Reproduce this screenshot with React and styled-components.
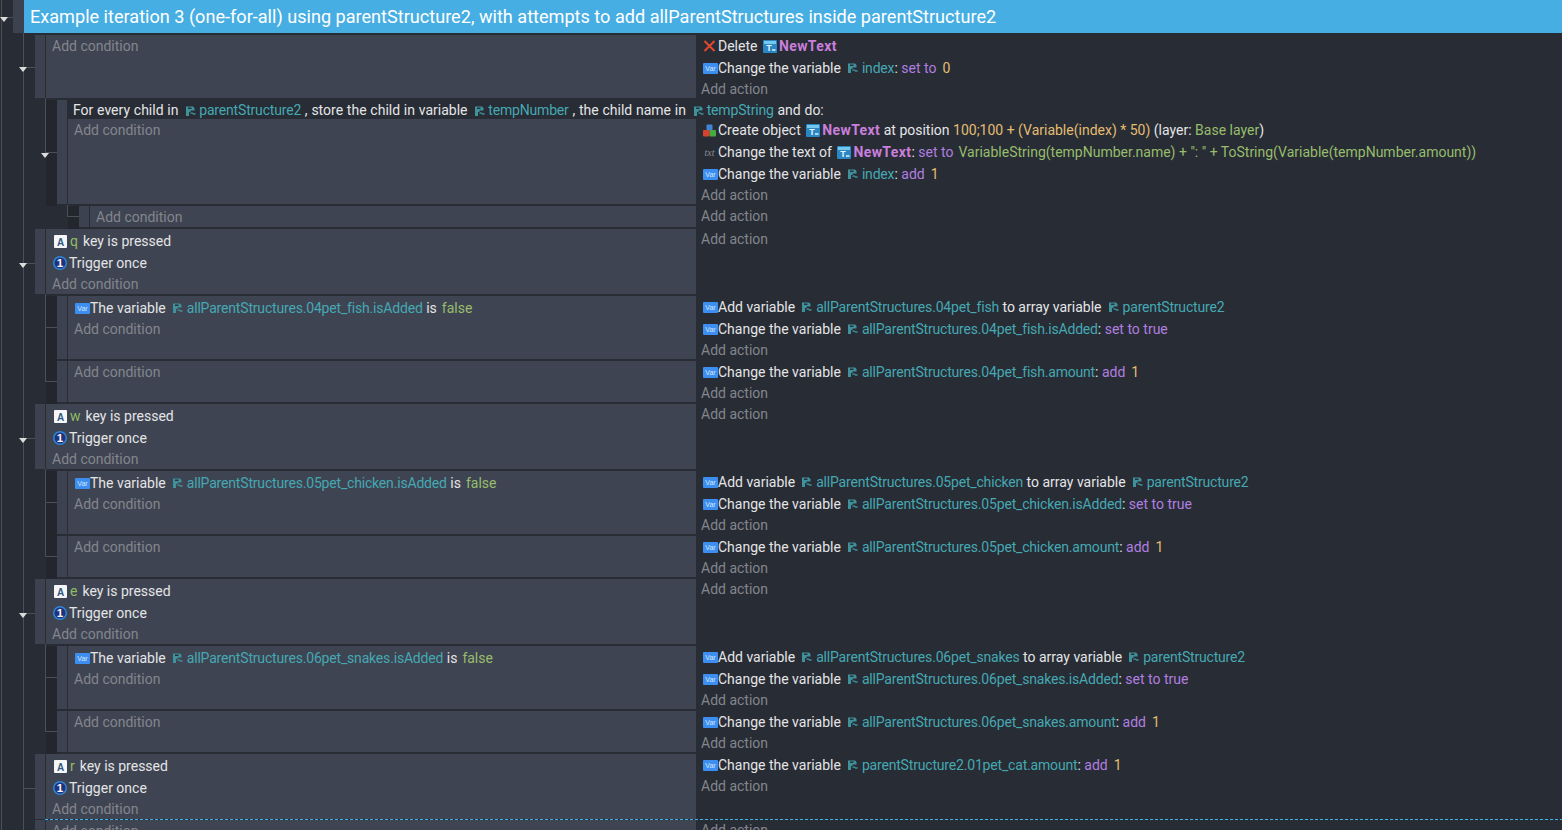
import styled, { createGlobalStyle } from "styled-components";

const GlobalStyle = createGlobalStyle`
  html, body {
    margin: 0;
    height: 830px;
    overflow: hidden;
    background: #282c34;
  }
`;

const Sheet = styled.div`
  width: 1562px;
  height: 830px;
  overflow: hidden;
  font-family: "Roboto", "Liberation Sans", sans-serif;
  font-size: 14px;
  color: #e4e5e7;
  background:
    linear-gradient(#4b4f59, #4b4f59) 1px 0 / 1px 100% no-repeat,
    linear-gradient(#4b4f59, #4b4f59) 23px 0 / 1px 100% no-repeat,
    #282c34;
`;

const GroupRow = styled.div`
  position: relative;
  display: flex;
  height: 33px;
  margin: 0 0 2px 13px;
`;

const GroupBar = styled.div`
  width: 11px;
  background: #3d4250;
`;

const GroupTitle = styled.div`
  flex: 1;
  padding-left: 6px;
  background: #47aee3;
  color: #fff;
  font-size: 18.1px;
  line-height: 34px;
  white-space: nowrap;
`;

const EventRow = styled.div`
  position: relative;
  display: flex;
  margin-left: ${(p) => 35 + p.$level * 22}px;
  margin-bottom: ${(p) => p.$gap ?? 2}px;

  &::before {
    content: "";
    display: ${(p) => (p.$level > 0 ? "block" : "none")};
    position: absolute;
    left: -11px;
    top: 0;
    bottom: -2px;
    width: 11px;
    background: #23262c;
  }
`;

const Bar = styled.div`
  flex: none;
  width: 10px;
  margin-right: 1px;
  background: #3d4250;
`;

const EventBody = styled.div`
  flex: 1;
  min-width: 0;
  display: flex;
  flex-direction: column;
`;

const LoopHeader = styled.div`
  height: 19px;
  padding-left: 5px;
  line-height: 20px;
  white-space: nowrap;
  word-spacing: 0.3px;
`;

const Columns = styled.div`
  display: flex;
`;

const Conditions = styled.div`
  flex: 1;
  padding: 1px 0 0 6px;
  background: #3f4452;
`;

const Actions = styled.div`
  flex: none;
  width: 861px;
  padding-left: 5px;
`;

const Line = styled.div`
  display: flex;
  align-items: center;
  height: 22px;
  padding-left: ${(p) => (p.$action ? 2 : 1)}px;
  white-space: pre;
`;

const AddCondition = styled.div`
  height: 20px;
  line-height: 20px;
  color: #83868d;
`;

const AddAction = styled.div`
  height: 19px;
  line-height: 21px;
  color: #83868d;
`;

const Ref = styled.span`
  color: #45a8b3;
  letter-spacing: -0.18px;
`;

const Op = styled.span`
  color: #b07fe0;
`;

const Num = styled.span`
  color: #e3bd72;
  margin-left: ${(p) => p.$gap ?? 6}px;
`;

const Str = styled.span`
  color: #97bd6d;
  margin-left: ${(p) => p.$gap ?? 5}px;
`;

const ObjName = styled.span`
  color: #c97fdc;
  font-weight: 700;
  letter-spacing: 0.4px;
`;

const Key = styled.span`
  color: #8fbd63;
  margin: 0 5px 0 3px;
`;

const Toggle = styled.div`
  position: absolute;
  left: ${(p) => p.$left ?? -16}px;
  top: calc(50% + ${(p) => p.$shift ?? 0}px);
  width: 0;
  height: 0;
  border-left: 4.5px solid transparent;
  border-right: 4.5px solid transparent;
  border-top: 5px solid #dcdcdc;
`;

const Stub = styled.div`
  position: absolute;
  left: -12px;
  top: calc(50% + ${(p) => p.$shift ?? 0}px);
  width: 12px;
  height: 1px;
  background: #4b4f59;
`;

const Branch = styled.div`
  position: absolute;
  left: -12px;
  bottom: calc(50% - ${(p) => p.$shift ?? 0}px);
  width: 11px;
  height: ${(p) => p.$up}px;
  border-left: 1px solid #4b4f59;
  border-bottom: 1px solid #4b4f59;
`;

const DropLine = styled.div`
  height: 1px;
  margin: -1px 0 0 45px;
  background: repeating-linear-gradient(to right, #3fb4ea 0 3px, transparent 3px 5px);
`;

const RefIconInline = styled.span`
  display: inline-block;
  vertical-align: -1px;
  margin: 0 -1px 0 -3px;
`;

const IconBox = styled.svg`
  flex: none;
  display: block;
  margin: ${(p) => p.$margin || "0"};
`;

function VarIcon() {
  return (
    <IconBox width="15" height="11" viewBox="0 0 15 11">
      <rect width="15" height="11" rx="1" fill="#3c8ff0" />
      <text x="7.5" y="8.3" fontSize="7" textAnchor="middle" fill="#d5e6fb" fontFamily="Liberation Sans">Var</text>
    </IconBox>
  );
}

function TextIcon() {
  return (
    <IconBox $margin="0 2px 0 2px" width="14" height="13" viewBox="0 0 14 13">
      <rect width="14" height="13" rx="1" fill="#2b86c4" />
      <rect x="1" y="1" width="12" height="3" fill="#74c8ee" />
      <text x="6" y="11" fontSize="9" fontWeight="700" textAnchor="middle" fill="#e3f4fd" fontFamily="Liberation Sans">T</text>
      <rect x="9" y="9" width="3.500" height="2" fill="#a7dcf5" />
    </IconBox>
  );
}

function RefIcon() {
  return (
    <IconBox $margin="0 4px 0 7px" width="10" height="10" viewBox="0 0 10 10">
      <path d="M0 0.500h7L8.500 2v2.500H4.500V6H3v4H0z" fill="#3f929c" />
      <path d="M2 1.500h3.500V3H2z" fill="#2c3038" />
      <path d="M4.500 7.500c1-1 1.500-1 2.500 0s1.500 1 2.500 0" fill="none" stroke="#3f929c" strokeWidth="1.200" />
    </IconBox>
  );
}

function DeleteIcon() {
  return (
    <IconBox $margin="0 2px 0 0" width="13" height="12" viewBox="0 0 13 12">
      <path d="M1.500 1 11.500 11M11.500 1 1.500 11" stroke="#e2492f" strokeWidth="2" fill="none" />
    </IconBox>
  );
}

function CreateIcon() {
  return (
    <IconBox $margin="0 2px 0 0" width="13" height="13" viewBox="0 0 13 13">
      <rect x="3.500" y="0.500" width="6" height="6" rx="1" fill="#3f86d8" />
      <rect x="0" y="6" width="6.500" height="6.500" rx="1" fill="#d9412f" />
      <rect x="6.500" y="6" width="6.500" height="6.500" rx="1" fill="#4aa83f" />
    </IconBox>
  );
}

function TxtIcon() {
  return (
    <IconBox $margin="0 2px 0 0" width="13" height="11" viewBox="0 0 13 11">
      <text x="6.500" y="9" fontSize="10" fontStyle="italic" textAnchor="middle" fill="#8b8e94" fontFamily="Liberation Serif">txt</text>
    </IconBox>
  );
}

function KeyIcon() {
  return (
    <IconBox $margin="0 0 0 1px" width="13" height="13" viewBox="0 0 13 13">
      <rect width="13" height="13" rx="1" fill="#f5f6f7" />
      <text x="6.500" y="10.500" fontSize="10" fontWeight="700" textAnchor="middle" fill="#33587f" fontFamily="Liberation Sans">A</text>
    </IconBox>
  );
}

function OnceIcon() {
  return (
    <IconBox $margin="0 2px 0 0" width="14" height="14" viewBox="0 0 14 14">
      <circle cx="7" cy="7" r="7" fill="#2f86d8" />
      <circle cx="7" cy="7" r="5.500" fill="#20327a" />
      <text x="7" y="11.200" fontSize="11.500" fontWeight="700" textAnchor="middle" fill="#f5f7fb" fontFamily="Liberation Sans">1</text>
    </IconBox>
  );
}

function VarRef({ children }) {
  return (
    <>
      <RefIcon />
      <Ref>{children}</Ref>
    </>
  );
}

function RefInline({ children }) {
  return (
    <>
      <RefIconInline>
        <RefIcon />
      </RefIconInline>
      <Ref>{children}</Ref>
    </>
  );
}

function ChangeVar({ name, op, value, isText }) {
  return (
    <Line $action>
      <VarIcon />
      {"Change the variable"}
      <VarRef>{name}</VarRef>: <Op>{op}</Op>
      {isText ? <Op> {value}</Op> : <Num>{value}</Num>}
    </Line>
  );
}

function AddToArray({ name }) {
  return (
    <Line $action>
      <VarIcon />
      {"Add variable"}
      <VarRef>{name}</VarRef>
      {" to array variable"}
      <VarRef>parentStructure2</VarRef>
    </Line>
  );
}

function Event({ level = 0, gap, conditions, actions, header, extras }) {
  return (
    <EventRow $level={level} $gap={gap}>
      {extras}
      <Bar />
      <EventBody>
        {header && <LoopHeader>{header}</LoopHeader>}
        <Columns>
          <Conditions>
            {conditions}
            <AddCondition>Add condition</AddCondition>
          </Conditions>
          <Actions>
            {actions}
            <AddAction>Add action</AddAction>
          </Actions>
        </Columns>
      </EventBody>
    </EventRow>
  );
}

function KeyConditions({ letter }) {
  return (
    <>
      <Line>
        <KeyIcon />
        <Key>{letter}</Key>
        {"key is pressed"}
      </Line>
      <Line>
        <OnceIcon />
        {"Trigger once"}
      </Line>
    </>
  );
}

function KeyEvent({ letter }) {
  return (
    <Event
      extras={
        <>
          <Stub $shift={1} />
          <Toggle $shift={1} />
        </>
      }
      conditions={<KeyConditions letter={letter} />}
    />
  );
}

function PetEvents({ pet }) {
  const path = `allParentStructures.${pet}`;
  return (
    <>
      <Event
        level={1}
        extras={<Branch $up={33} />}
        conditions={
          <Line>
            <VarIcon />
            {"The variable"}
            <VarRef>{path}.isAdded</VarRef>
            {" is"}
            <Str>false</Str>
          </Line>
        }
        actions={
          <>
            <AddToArray name={path} />
            <ChangeVar name={`${path}.isAdded`} op="set to" value="true" isText />
          </>
        }
      />
      <Event
        level={1}
        extras={<Branch $up={87} />}
        actions={<ChangeVar name={`${path}.amount`} op="add" value="1" />}
      />
    </>
  );
}

export default function App() {
  return (
    <Sheet>
      <GlobalStyle />
      <GroupRow>
        <Stub />
        <Toggle $left={-13} />
        <GroupBar />
        <GroupTitle>
          Example iteration 3 (one-for-all) using parentStructure2, with attempts to add allParentStructures inside parentStructure2
        </GroupTitle>
      </GroupRow>

      <Event
        extras={
          <>
            <Stub />
            <Toggle />
          </>
        }
        actions={
          <>
            <Line $action>
              <DeleteIcon />
              {"Delete "}
              <TextIcon />
              <ObjName>NewText</ObjName>
            </Line>
            <ChangeVar name="index" op="set to" value="0" />
          </>
        }
      />

      <Event
        level={1}
        extras={
          <>
            <Branch $up={54} $shift={1} />
            <Toggle $shift={1} />
          </>
        }
        header={
          <>
            For every child in <RefInline>parentStructure2</RefInline> , store the child in variable{" "}
            <RefInline>tempNumber</RefInline> , the child name in <RefInline>tempString</RefInline> and do:
          </>
        }
        actions={
          <>
            <Line $action>
              <CreateIcon />
              {"Create object "}
              <TextIcon />
              <ObjName>NewText</ObjName>
              {" at position "}
              <Num $gap={0}>100;100 + (Variable(index) * 50)</Num>
              {" (layer: "}
              <Str $gap={0}>Base layer</Str>)
            </Line>
            <Line $action>
              <TxtIcon />
              {"Change the text of "}
              <TextIcon />
              <ObjName>NewText</ObjName>: <Op>set to</Op>
              <Str>VariableString(tempNumber.name) + ": " + ToString(Variable(tempNumber.amount))</Str>
            </Line>
            <ChangeVar name="index" op="add" value="1" />
          </>
        }
      />
      <Event level={2} extras={<Branch $up={11} />} />

      <KeyEvent letter="q" />
      <PetEvents pet="04pet_fish" />
      <KeyEvent letter="w" />
      <PetEvents pet="05pet_chicken" />
      <KeyEvent letter="e" />
      <PetEvents pet="06pet_snakes" />
      <Event
        gap={1}
        extras={<Stub $shift={1} />}
        conditions={<KeyConditions letter="r" />}
        actions={<ChangeVar name="parentStructure2.01pet_cat.amount" op="add" value="1" />}
      />
      <DropLine />
      <Event />
    </Sheet>
  );
}
